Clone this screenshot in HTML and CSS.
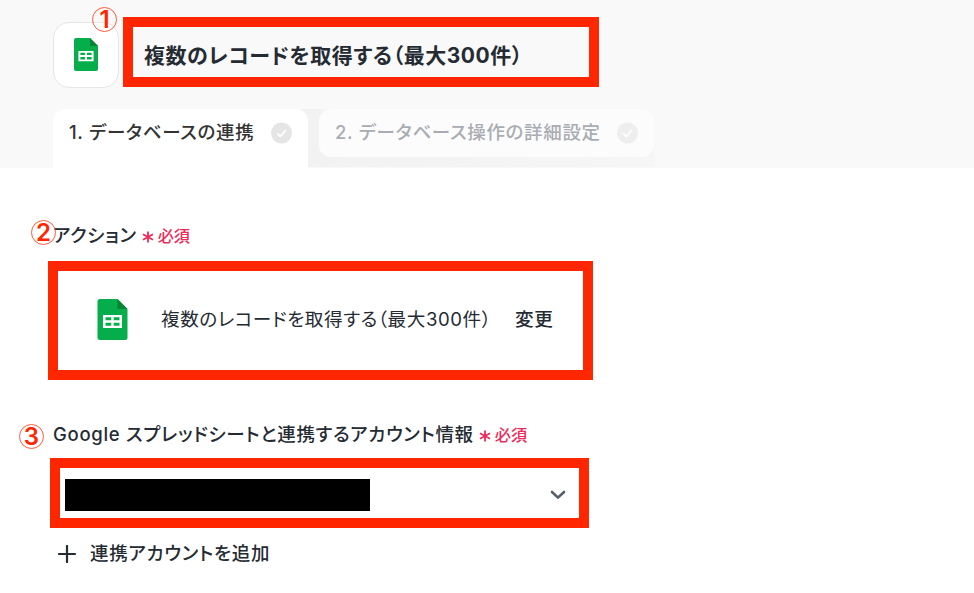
FILE: index.html
```html
<!DOCTYPE html>
<html lang="ja">
<head>
  <meta charset="UTF-8">
  <meta name="viewport" content="width=device-width, initial-scale=1">
  <title>複数のレコードを取得する</title>
  <link rel="stylesheet" href="styles.css">
</head>
<body>

  <svg class="defs" width="0" height="0">
    <symbol id="sheets" viewBox="0 0 30 41">
      <path d="M2.5 0H20L30 10V38.5A2.5 2.5 0 0 1 27.5 41H2.5A2.5 2.5 0 0 1 0 38.5V2.5A2.5 2.5 0 0 1 2.5 0Z" fill="#05ae4b"/>
      <path d="M20 0L30 10H20Z" fill="#068433"/>
      <path fill-rule="evenodd" d="M5.5 16H24.5V29H5.5ZM8 18.3V21.2H13.8V18.3ZM16.2 18.3V21.2H22V18.3ZM8 23.7V26.7H13.8V23.7ZM16.2 23.7V26.7H22V23.7Z" fill="#fff"/>
    </symbol>
    <symbol id="check" viewBox="0 0 21 21">
      <circle cx="10.5" cy="10.5" r="10.5" fill="#e5e5e5"/>
      <path d="M6.2 10.8L9.2 13.9L15 7.6" fill="none" stroke="#fff" stroke-width="1.8"/>
    </symbol>
    <symbol id="asterisk" viewBox="0 0 12 12">
      <path d="M6 .5V11.5M1 3.2L11 8.8M11 3.2L1 8.8" stroke="#ee2a5c" stroke-width="1.8"/>
    </symbol>
  </svg>

  <header class="header">
    <div class="title-row">
      <div class="app-card">
        <svg class="app-icon"><use href="#sheets"/></svg>
        <span class="step step-1">1</span>
      </div>
      <h1 class="title frame">複数のレコードを取得する（最大300件）</h1>
    </div>
    <nav class="tabs">
      <div class="tab active">
        <span class="tab-label">1. データベースの連携</span>
        <svg class="check"><use href="#check"/></svg>
      </div>
      <div class="tab disabled">
        <span class="tab-label">2. データベース操作の詳細設定</span>
        <svg class="check"><use href="#check"/></svg>
      </div>
    </nav>
  </header>

  <main class="content">
    <div class="label label-action">
      <span class="step step-2">2</span>
      <span class="label-text">アクション</span>
      <svg class="asterisk"><use href="#asterisk"/></svg>
      <span class="required">必須</span>
    </div>
    <div class="action frame">
      <svg class="action-icon"><use href="#sheets"/></svg>
      <span class="action-name">複数のレコードを取得する（最大300件）</span>
      <span class="change">変更</span>
    </div>

    <div class="label label-account">
      <span class="step step-3">3</span>
      <span class="label-text">Google スプレッドシートと連携するアカウント情報</span>
      <svg class="asterisk"><use href="#asterisk"/></svg>
      <span class="required">必須</span>
    </div>
    <div class="account frame">
      <div class="account-name"></div>
      <svg class="chevron" viewBox="0 0 16 10"><path d="M2 2L8 7.6L14 2" fill="none" stroke="#545d69" stroke-width="2.6" stroke-linecap="round" stroke-linejoin="round"/></svg>
    </div>
    <div class="add">
      <svg class="plus" viewBox="0 0 18 18"><path d="M9 1V17M1 9H17" stroke="#252b33" stroke-width="2.2" stroke-linecap="round"/></svg>
      <span class="add-label">連携アカウントを追加</span>
    </div>
  </main>

</body>
</html>
```
FILE: styles.css
```css
* {
  box-sizing: border-box;
}

body {
  margin: 0;
  background: #fff;
  color: #252b33;
  font-family: Inter, "Noto Sans CJK JP", sans-serif;
  font-feature-settings: "palt";
  white-space: nowrap;
}

.defs {
  position: absolute;
}

.frame {
  border: 10px solid #ff2600;
}

.header {
  height: 168px;
  padding: 17px 0 0 53px;
  background: #f9f9f9;
}

.title-row {
  display: flex;
  gap: 4px;
}

.app-card {
  position: relative;
  display: flex;
  align-items: center;
  justify-content: center;
  width: 66px;
  height: 66px;
  margin-top: 5px;
  padding-bottom: 2px;
  background: #fff;
  border: 1px solid #e6e6e6;
  border-radius: 16px;
}

.app-icon {
  width: 24px;
  height: 33px;
}

.title {
  width: 476px;
  height: 70px;
  margin: 0;
  padding-left: 11px;
  font-size: 21px;
  font-weight: 700;
  line-height: 58px;
  letter-spacing: 0.55px;
}

.tabs {
  display: flex;
  gap: 11px;
  width: 601px;
  height: 58px;
  margin-top: 21px;
  background: linear-gradient(90deg, #f2f2f2 45%, #f6f6f6);
  border-radius: 14px 14px 0 0;
}

.tab {
  display: flex;
  align-items: center;
  justify-content: space-between;
  height: 48px;
  padding: 0 16px;
  border-radius: 12px;
  font-size: 18.5px;
  font-weight: 500;
  letter-spacing: 0.67px;
}

.tab-label {
  padding-bottom: 4px;
}

.active {
  width: 255px;
  height: 59px;
  padding-bottom: 11px;
  background: #fff;
  border-radius: 12px 12px 0 0;
  color: #333;
}

.disabled {
  width: 335px;
  background: #fcfcfc;
  color: #a9adb3;
}

.check {
  width: 21px;
  height: 22px;
}

.disabled .check {
  opacity: 0.6;
}

.content {
  padding-left: 48px;
}

.label {
  position: relative;
  display: flex;
  align-items: center;
  height: 30px;
  padding-left: 5px;
  font-size: 18.5px;
  font-weight: 500;
}

.label-action {
  margin-top: 52px;
}

.label-account {
  margin-top: 39px;
}

.label-text {
  padding-bottom: 2px;
  letter-spacing: 0.69px;
}

.asterisk {
  width: 12px;
  height: 12px;
  margin: 4px 4px 0 5px;
}

.required {
  color: #ee2a5c;
  font-size: 16.2px;
}

.action {
  display: flex;
  align-items: center;
  width: 545px;
  height: 119px;
  margin-top: 11px;
  padding: 0 0 3px 39px;
  font-size: 18.6px;
}

.action-icon {
  width: 31px;
  height: 41px;
}

.action-name {
  width: 387px;
  padding: 0 0 3px 33px;
  letter-spacing: 0.56px;
}

.change {
  padding-bottom: 3px;
  font-weight: 500;
  letter-spacing: 0.6px;
}

.account {
  display: flex;
  align-items: center;
  justify-content: space-between;
  width: 539px;
  height: 70px;
  margin: 9px 0 0 2px;
  padding: 0 13px 0 5px;
}

.account-name {
  width: 305px;
  height: 32px;
  margin-top: 4px;
  background: #000;
}

.chevron {
  width: 16px;
  height: 10px;
  margin-top: 4px;
}

.add {
  display: flex;
  align-items: center;
  gap: 14px;
  height: 30px;
  margin-top: 11px;
  padding-left: 10px;
  font-size: 18.5px;
  font-weight: 500;
}

.plus {
  width: 18px;
  height: 18px;
}

.add-label {
  padding-bottom: 5px;
  letter-spacing: 0.75px;
}

/* numbered callouts sitting over the form */
.step {
  position: absolute;
  width: 25px;
  height: 25px;
  border: 1px solid #ff5a40;
  border-radius: 50%;
  color: #ff2600;
  font-family: Inter, sans-serif;
  font-size: 24px;
  font-weight: 600;
  line-height: 23px;
  letter-spacing: 0;
  text-align: center;
}

.step-1 {
  top: -16px;
  left: 38px;
}

.step-2 {
  top: 0;
  left: -17px;
}

.step-3 {
  top: 5px;
  left: -29px;
}
```
